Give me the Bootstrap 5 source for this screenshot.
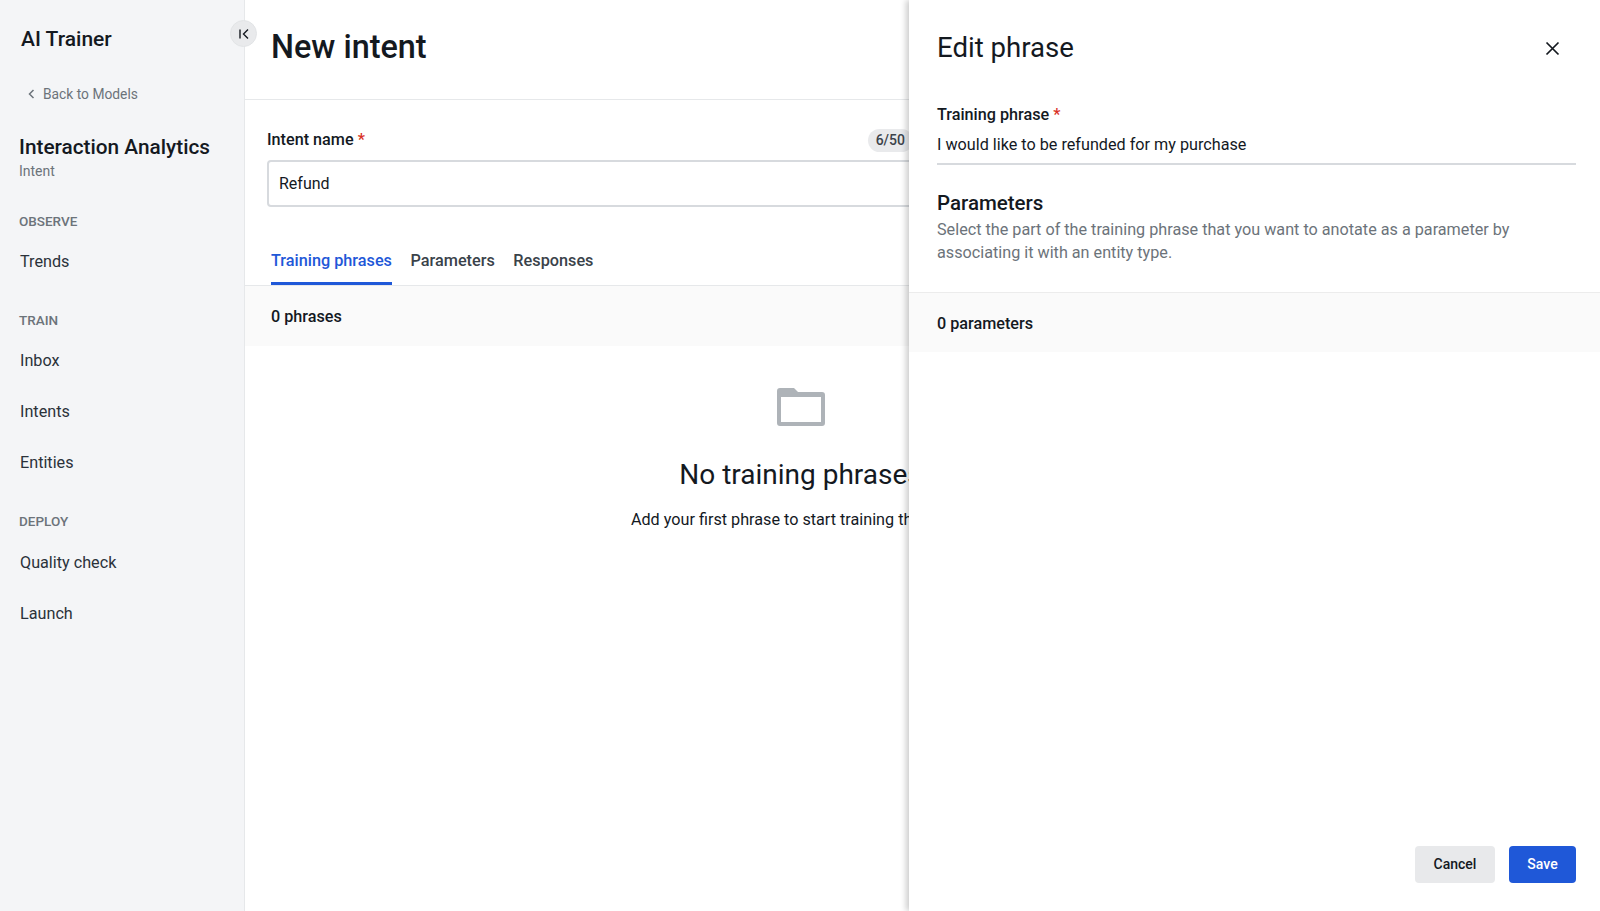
<!DOCTYPE html>
<html lang="en">
<head>
  <meta charset="UTF-8" />
  <meta name="viewport" content="width=device-width, initial-scale=1.0"/>
  <title>AI Trainer - New intent</title>
  <link href="https://cdn.jsdelivr.net/npm/bootstrap@5.3.2/dist/css/bootstrap.min.css" rel="stylesheet">
  <style>
    body {
      font-family: Roboto, "Liberation Sans", sans-serif;
      color: #14191f;
      height: 911px;
      overflow: hidden;
      background: #fff;
    }

    /* sidebar */
    .side-bar {
      width: 245px;
      height: 911px;
      flex: none;
      background: #f4f5f7;
      border-right: 1px solid #e6e8ea;
    }
    .brand-name { font-size: 21px; font-weight: 500; line-height: 26px; padding: 26px 0 0 21px; }
    .back-link { font-size: 13.8px; color: #6c737a; line-height: 20px; padding: 32px 0 0 28px; gap: 8px; }
    .back-link:hover { color: #6c737a; }
    .model-name { font-size: 20.8px; font-weight: 500; line-height: 26px; padding: 30px 0 0 19px; }
    .model-sub { font-size: 14px; color: #6c737a; line-height: 20px; padding: 1px 0 0 19px; }
    .side-group { font-size: 13.5px; font-weight: 500; color: #6c737a; line-height: 18px; padding-left: 19px; }
    .side-item { font-size: 16.2px; color: #2b323a; line-height: 20px; padding: 0 0 0 20px; margin-bottom: 31px; }
    .group-first { margin-top: 31px; margin-bottom: 22px; }
    .group-next { margin-top: 39px; margin-bottom: 22px; }
    .group-last { margin-top: 39px; margin-bottom: 23px; }
    .collapse-btn {
      position: absolute;
      left: 230px;
      top: 20px;
      width: 27px;
      height: 27px;
      padding: 0;
      border-radius: 50%;
      border: 1px solid #e2e4e6;
      background: #e9eaec;
    }

    /* main */
    .main-area { width: 1111px; flex: none; }
    .page-head { height: 100px; padding: 28px 0 0 26px; border-bottom: 1px solid #e6e8ea; }
    .page-head h1 { font-size: 32.4px; font-weight: 500; line-height: 39px; margin: 0; }
    .name-block { padding: 28px 22px 0 22px; }
    .field-label { font-size: 16.2px; font-weight: 500; line-height: 24px; margin: 0; }
    .req { color: #d93025; }
    .count-pill {
      font-size: 14px;
      font-weight: 500;
      color: #3c434a;
      background: #e9eaec;
      border-radius: 12px;
      padding: 2px 8px;
      line-height: 19px;
      margin-right: 421px;
    }
    .name-input.form-control {
      height: 47px;
      margin-top: 8px;
      font-size: 16px;
      color: #14191f;
      padding: 0 10px;
      border: 2px solid #d7dade;
      border-radius: 4px;
    }
    .tab-row {
      gap: 18.5px;
      height: 79px;
      padding: 0 0 0 26px;
      border-bottom: 1px solid #e6e8ea;
      margin-bottom: 0;
    }
    .tab-row .nav-link {
      font-size: 16.25px;
      font-weight: 500;
      line-height: 20px;
      padding: 44px 0 11px;
      color: #3a424a;
      background: none;
      border: 0;
      border-radius: 0;
      border-bottom: 3px solid transparent;
      height: 78px;
    }
    .tab-row .nav-link.active { color: #1f58d8; border-bottom-color: #1f58d8; }
    .count-band { height: 60px; background: #fafafa; font-size: 16.2px; font-weight: 500; padding: 3px 0 0 26px; }
    .empty-state { padding-top: 42px; }
    .empty-state h3 { font-size: 28px; font-weight: 400; line-height: 34px; margin: 32px 0 0; white-space: nowrap; }
    .empty-state p { font-size: 16.2px; line-height: 22px; margin: 17px 0 0; white-space: nowrap; }

    /* drawer on top of the page */
    .edit-panel {
      position: absolute;
      top: 0;
      right: 0;
      width: 691px;
      height: 911px;
      background: #fff;
      box-shadow: -3px 0 6px rgba(0,0,0,0.2);
    }
    .panel-head { padding: 30px 24px 0 28px; height: 103px; }
    .panel-head h2 { font-size: 27.6px; font-weight: 400; line-height: 36px; margin: 0; }
    .close-x { background: none; border: 0; padding: 0; width: 24px; height: 24px; margin-top: 6px; margin-right: 12px; }
    .phrase-block { padding: 0 24px 0 28px; }
    .phrase-label { font-size: 16.2px; font-weight: 500; line-height: 24px; margin: 0; }
    .phrase-input.form-control {
      font-size: 16.2px;
      color: #14191f;
      padding: 0 0 7px;
      line-height: 22px;
      margin-top: 7px;
      border: 0;
      border-bottom: 2px solid #d7dade;
      border-radius: 0;
    }
    .param-title { font-size: 20.5px; font-weight: 500; line-height: 26px; margin: 25px 0 0; }
    .param-desc { font-size: 16.2px; line-height: 23px; color: #6c737a; margin: 2px 0 0; }
    .param-band {
      height: 60px;
      margin-top: 28px;
      background: #fafafa;
      border-top: 1px solid #ececec;
      font-size: 16.2px;
      font-weight: 500;
      padding: 3px 0 0 28px;
    }
    .panel-foot { padding: 0 24px 28px 0; gap: 14px; }
    .btn-cancel, .btn-save {
      height: 37px;
      font-size: 14px;
      font-weight: 500;
      padding: 0;
      border-radius: 4px;
      border: 0;
    }
    .btn-cancel { width: 80px; background: #e8e9eb; color: #14191f; }
    .btn-save { width: 67px; background: #1f58d8; color: #fff; }
  </style>
</head>
<body>
  <div class="d-flex">
    <aside class="side-bar">
      <div class="brand-name">AI Trainer</div>
      <a href="#" class="back-link d-flex align-items-center text-decoration-none">
        <svg width="7" height="10" viewBox="0 0 7 10" fill="none" stroke="#6c737a" stroke-width="1.5"><path d="M5.5 1 1.5 5l4 4"/></svg>
        <span>Back to Models</span>
      </a>
      <div class="model-name">Interaction Analytics</div>
      <div class="model-sub">Intent</div>

      <div class="side-group group-first">OBSERVE</div>
      <div class="side-item mb-0">Trends</div>

      <div class="side-group group-next">TRAIN</div>
      <div class="side-item">Inbox</div>
      <div class="side-item">Intents</div>
      <div class="side-item mb-0">Entities</div>

      <div class="side-group group-last">DEPLOY</div>
      <div class="side-item">Quality check</div>
      <div class="side-item">Launch</div>
    </aside>

    <button class="collapse-btn d-flex align-items-center justify-content-center" aria-label="Collapse">
      <svg width="12" height="12" viewBox="0 0 12 12" fill="none" stroke="#14191f" stroke-width="1.4"><path d="M2 1.5v9M10 1.5 5.5 6l4.5 4.5"/></svg>
    </button>

    <main class="main-area">
      <div class="page-head"><h1>New intent</h1></div>

      <div class="name-block">
        <div class="d-flex justify-content-between align-items-center">
          <label class="field-label">Intent name <span class="req">*</span></label>
          <span class="count-pill">6/50</span>
        </div>
        <input class="form-control name-input" type="text" value="Refund">
      </div>

      <ul class="nav tab-row">
        <li class="nav-item"><a class="nav-link active" href="#">Training phrases</a></li>
        <li class="nav-item"><a class="nav-link" href="#">Parameters</a></li>
        <li class="nav-item"><a class="nav-link" href="#">Responses</a></li>
      </ul>

      <div class="count-band d-flex align-items-center">0 phrases</div>

      <div class="empty-state d-flex flex-column align-items-center">
        <svg width="48" height="38" viewBox="0 0 48 38" fill="#aeb3b8"><path fill-rule="evenodd" d="M3 0h14l4 4h24a3 3 0 0 1 3 3v28a3 3 0 0 1-3 3H3a3 3 0 0 1-3-3V3a3 3 0 0 1 3-3Zm1 9v25h40V9H4Z"/></svg>
        <h3>No training phrases</h3>
        <p>Add your first phrase to start training the model</p>
      </div>
    </main>
  </div>

  <section class="edit-panel d-flex flex-column">
    <div class="panel-head d-flex justify-content-between align-items-start">
      <h2>Edit phrase</h2>
      <button class="close-x d-flex align-items-center justify-content-center" aria-label="Close">
        <svg width="15" height="15" viewBox="0 0 15 15" fill="none" stroke="#14191f" stroke-width="1.7"><path d="M1.5 1.5l12 12M13.5 1.5l-12 12"/></svg>
      </button>
    </div>

    <div class="phrase-block">
      <label class="phrase-label d-block">Training phrase <span class="req">*</span></label>
      <input class="form-control phrase-input" type="text" value="I would like to be refunded for my purchase">
      <div class="param-title">Parameters</div>
      <p class="param-desc">Select the part of the training phrase that you want to anotate as a parameter by associating it with an entity type.</p>
    </div>

    <div class="param-band d-flex align-items-center">0 parameters</div>

    <div class="panel-foot mt-auto d-flex justify-content-end">
      <button class="btn btn-cancel">Cancel</button>
      <button class="btn btn-save">Save</button>
    </div>
  </section>

  <script src="https://cdn.jsdelivr.net/npm/bootstrap@5.3.2/dist/js/bootstrap.bundle.min.js"></script>
</body>
</html>
